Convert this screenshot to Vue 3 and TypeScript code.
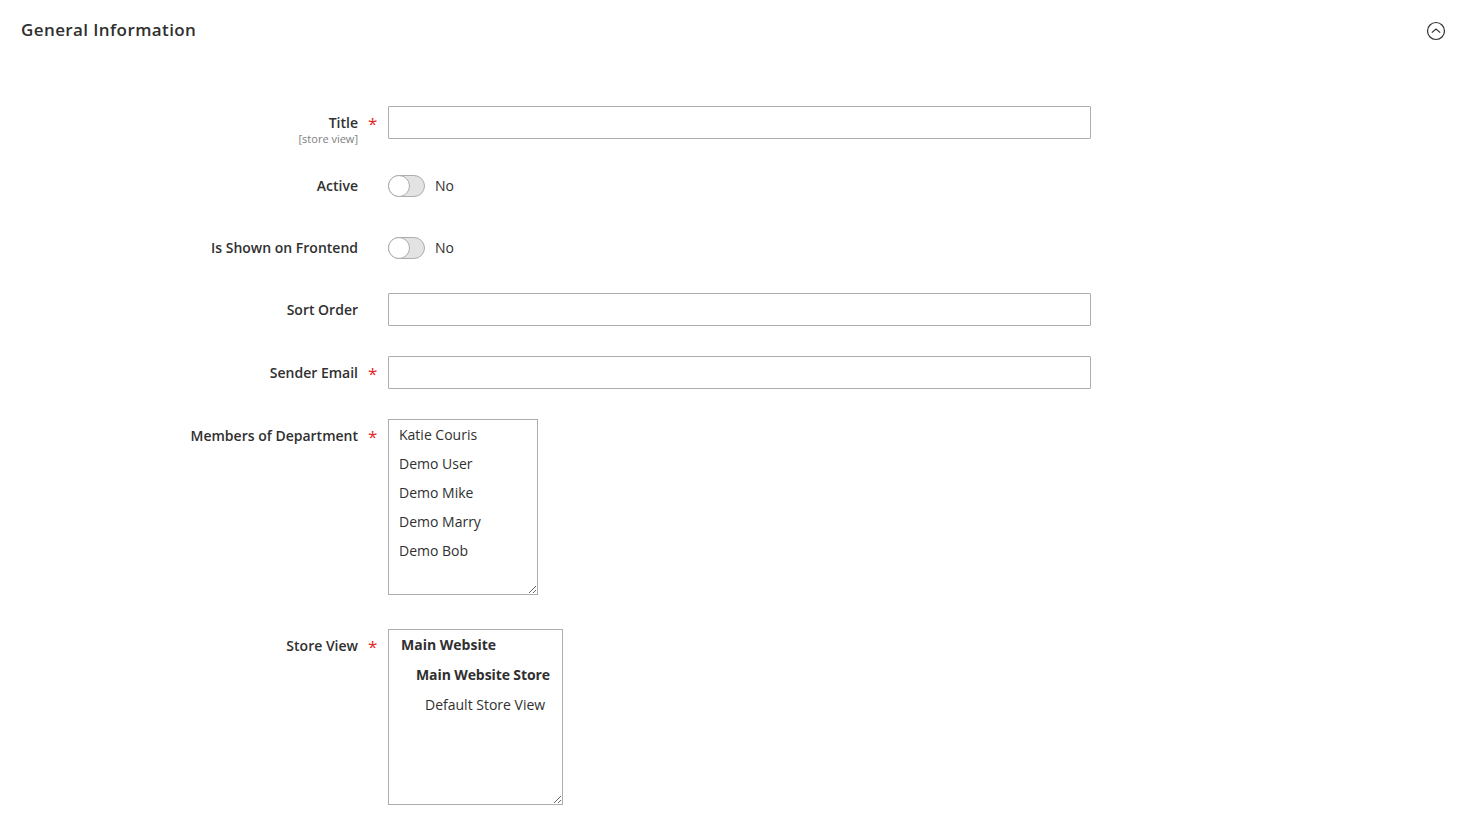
<script setup lang="ts">
const members: string[] = ['Katie Couris', 'Demo User', 'Demo Mike', 'Demo Marry', 'Demo Bob']
</script>

<template>
  <main class="page">
    <header class="section-head">
      <h2 class="section-title">General Information</h2>
      <svg class="collapse" width="20" height="20" viewBox="0 0 20 20" aria-hidden="true">
        <circle cx="10" cy="10" r="8.5" fill="none" stroke="#303030" stroke-width="1.2" />
        <path d="M5.8 11.6 L10 8 L14.2 11.6" fill="none" stroke="#303030" stroke-width="1.2" />
      </svg>
    </header>

    <form class="form">
      <div class="row title-row">
        <div class="label">
          <span class="label-text">Title</span>
          <span class="scope">[store view]</span>
        </div>
        <span class="star">*</span>
        <input class="input" type="text" />
      </div>

      <div class="row toggle-row">
        <div class="label"><span class="label-text">Active</span></div>
        <span class="star"></span>
        <div class="toggle-wrap">
          <span class="toggle"><span class="knob"></span></span>
          <span class="toggle-text">No</span>
        </div>
      </div>

      <div class="row toggle-row">
        <div class="label"><span class="label-text">Is Shown on Frontend</span></div>
        <span class="star"></span>
        <div class="toggle-wrap">
          <span class="toggle"><span class="knob"></span></span>
          <span class="toggle-text">No</span>
        </div>
      </div>

      <div class="row">
        <div class="label"><span class="label-text">Sort Order</span></div>
        <span class="star"></span>
        <input class="input" type="text" />
      </div>

      <div class="row">
        <div class="label"><span class="label-text">Sender Email</span></div>
        <span class="star">*</span>
        <input class="input" type="text" />
      </div>

      <div class="row">
        <div class="label"><span class="label-text">Members of Department</span></div>
        <span class="star">*</span>
        <div class="listbox members">
          <div v-for="m in members" :key="m" class="option">{{ m }}</div>
        </div>
      </div>

      <div class="row store-row">
        <div class="label"><span class="label-text">Store View</span></div>
        <span class="star">*</span>
        <div class="listbox stores">
          <div class="store website">Main Website</div>
          <div class="store group">Main Website Store</div>
          <div class="store view">Default Store View</div>
        </div>
      </div>
    </form>
  </main>
</template>

<style>
html, body {
  margin: 0;
  background: #fff;
}
</style>

<style scoped>
.page {
  width: 1477px;
  height: 824px;
  overflow: hidden;
  box-sizing: border-box;
  font-family: "Open Sans", sans-serif;
  color: #303030;
  font-size: 14px;
}
.section-head {
  display: flex;
  justify-content: space-between;
  align-items: flex-start;
  padding: 18px 31px 0 21px;
  height: 106px;
  box-sizing: border-box;
}
.section-title {
  margin: 0;
  font-size: 17px;
  line-height: 24px;
  font-weight: 600;
  letter-spacing: 0.4px;
  color: #303030;
}
.collapse {
  margin-top: 3px;
}
.form {
  display: flex;
  flex-direction: column;
  gap: 30px;
}
.row {
  display: flex;
  align-items: flex-start;
}
.title-row {
  height: 33px;
}
.toggle-row {
  height: 32px;
  box-sizing: border-box;
  padding-top: 2px;
  align-items: center;
}
.store-row {
  margin-top: 4px;
}
.label {
  width: 358px;
  flex: none;
  display: flex;
  flex-direction: column;
  align-items: flex-end;
  padding-top: 7px;
  box-sizing: border-box;
}
.toggle-row .label {
  padding-top: 0;
}
.label-text {
  font-weight: 600;
  line-height: 20px;
}
.scope {
  font-size: 11px;
  line-height: 13px;
  margin-top: -1px;
  color: #808080;
}
.star {
  width: 30px;
  flex: none;
  box-sizing: border-box;
  padding: 8px 0 0 10px;
  font-size: 17px;
  line-height: 20px;
  font-weight: 400;
  color: #e22626;
}
.input {
  width: 703px;
  height: 33px;
  box-sizing: border-box;
  border: 1px solid #adadad;
  border-radius: 1px;
  background: #fff;
  padding: 0 10px;
  margin: 0;
  font: inherit;
  outline: none;
}
.toggle-wrap {
  display: flex;
  align-items: center;
  gap: 10px;
}
.toggle {
  position: relative;
  display: block;
  width: 37px;
  height: 22px;
  box-sizing: border-box;
  border: 1px solid #adadad;
  border-radius: 12px;
  background: #e3e3e3;
}
.knob {
  position: absolute;
  left: -1px;
  top: -1px;
  width: 22px;
  height: 22px;
  box-sizing: border-box;
  border: 1px solid #adadad;
  border-radius: 50%;
  background: #fff;
}
.toggle-text {
  line-height: 20px;
}
.listbox {
  height: 176px;
  box-sizing: border-box;
  border: 1px solid #adadad;
  background: #fff;
  overflow: auto;
  resize: both;
}
.members {
  width: 150px;
}
.option {
  height: 29px;
  line-height: 29px;
  padding-left: 10px;
}
.stores {
  width: 175px;
}
.store {
  height: 30px;
  line-height: 30px;
  white-space: nowrap;
}
.website {
  padding-left: 12px;
  font-weight: 700;
}
.group {
  padding-left: 27px;
  font-weight: 700;
  letter-spacing: -0.1px;
}
.view {
  padding-left: 36px;
}
</style>
